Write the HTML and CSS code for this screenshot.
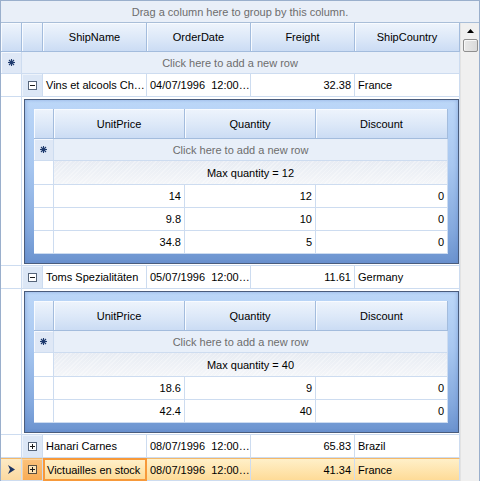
FILE: index.html
```html
<!DOCTYPE html>
<html>
<head>
<meta charset="utf-8">
<link rel="stylesheet" href="styles.css">
</head>
<body>
<div class="grid">
  <div class="group-panel">Drag a column here to group by this column.</div>
  <div class="body">
    <div class="main">
      <div class="row header">
        <div class="hcell"></div>
        <div class="hcell"></div>
        <div class="hcell">ShipName</div>
        <div class="hcell">OrderDate</div>
        <div class="hcell">Freight</div>
        <div class="hcell">ShipCountry</div>
      </div>
      <div class="newrow">
        <div class="ind nind"><svg width="9" height="9" viewBox="0 0 9 9"><g stroke="#1e3a6e" stroke-width="1.1"><line x1="4.5" y1="1" x2="4.5" y2="8"/><line x1="1" y1="4.5" x2="8" y2="4.5"/><line x1="2" y1="2" x2="7" y2="7"/><line x1="7" y1="2" x2="2" y2="7"/></g></svg></div>
        <div class="newtext">Click here to add a new row</div>
      </div>
      <div class="row data">
        <div class="ind"></div>
        <div class="exp"><svg width="9" height="9" viewBox="0 0 9 9"><rect x="0.5" y="0.5" width="8" height="8" fill="#fff" stroke="#56657a"/><path d="M2 4.5h5" stroke="#1b1b1b"/></svg></div>
        <div class="cell">Vins et alcools Ch…</div>
        <div class="cell">04/07/1996&nbsp; 12:00…</div>
        <div class="cell num">32.38</div>
        <div class="cell">France</div>
      </div>
      <div class="detail">
        <div class="ind"></div>
        <div class="detail-cell">
          <div class="panel">
            <div class="sub">
              <div class="srow shead">
                <div class="shcell"></div>
                <div class="shcell">UnitPrice</div>
                <div class="shcell">Quantity</div>
                <div class="shcell">Discount</div>
              </div>
              <div class="snew">
                <div class="sind nind"><svg width="9" height="9" viewBox="0 0 9 9"><g stroke="#1e3a6e" stroke-width="1.1"><line x1="4.5" y1="1" x2="4.5" y2="8"/><line x1="1" y1="4.5" x2="8" y2="4.5"/><line x1="2" y1="2" x2="7" y2="7"/><line x1="7" y1="2" x2="2" y2="7"/></g></svg></div>
                <div class="snewtext">Click here to add a new row</div>
              </div>
              <div class="ssum">
                <div class="sind"></div>
                <div class="sumtext">Max quantity = 12</div>
              </div>
              <div class="srow sdata"><div class="sind"></div><div class="scell">14</div><div class="scell">12</div><div class="scell">0</div></div>
              <div class="srow sdata"><div class="sind"></div><div class="scell">9.8</div><div class="scell">10</div><div class="scell">0</div></div>
              <div class="srow sdata"><div class="sind"></div><div class="scell">34.8</div><div class="scell">5</div><div class="scell">0</div></div>
            </div>
          </div>
        </div>
      </div>
      <div class="row data">
        <div class="ind"></div>
        <div class="exp"><svg width="9" height="9" viewBox="0 0 9 9"><rect x="0.5" y="0.5" width="8" height="8" fill="#fff" stroke="#56657a"/><path d="M2 4.5h5" stroke="#1b1b1b"/></svg></div>
        <div class="cell">Toms Spezialitäten</div>
        <div class="cell">05/07/1996&nbsp; 12:00…</div>
        <div class="cell num">11.61</div>
        <div class="cell">Germany</div>
      </div>
      <div class="detail">
        <div class="ind"></div>
        <div class="detail-cell">
          <div class="panel">
            <div class="sub">
              <div class="srow shead">
                <div class="shcell"></div>
                <div class="shcell">UnitPrice</div>
                <div class="shcell">Quantity</div>
                <div class="shcell">Discount</div>
              </div>
              <div class="snew">
                <div class="sind nind"><svg width="9" height="9" viewBox="0 0 9 9"><g stroke="#1e3a6e" stroke-width="1.1"><line x1="4.5" y1="1" x2="4.5" y2="8"/><line x1="1" y1="4.5" x2="8" y2="4.5"/><line x1="2" y1="2" x2="7" y2="7"/><line x1="7" y1="2" x2="2" y2="7"/></g></svg></div>
                <div class="snewtext">Click here to add a new row</div>
              </div>
              <div class="ssum">
                <div class="sind"></div>
                <div class="sumtext">Max quantity = 40</div>
              </div>
              <div class="srow sdata"><div class="sind"></div><div class="scell">18.6</div><div class="scell">9</div><div class="scell">0</div></div>
              <div class="srow sdata"><div class="sind"></div><div class="scell">42.4</div><div class="scell">40</div><div class="scell">0</div></div>
            </div>
          </div>
        </div>
      </div>
      <div class="row data">
        <div class="ind"></div>
        <div class="exp"><svg width="9" height="9" viewBox="0 0 9 9"><rect x="0.5" y="0.5" width="8" height="8" fill="#fff" stroke="#56657a"/><path d="M2 4.5h5M4.5 2v5" stroke="#1b1b1b"/></svg></div>
        <div class="cell">Hanari Carnes</div>
        <div class="cell">08/07/1996&nbsp; 12:00…</div>
        <div class="cell num">65.83</div>
        <div class="cell">Brazil</div>
      </div>
      <div class="row data selected">
        <div class="ind"><svg width="7" height="9" viewBox="0 0 7 9"><path d="M0 0L7 4.5L0 9L2 4.5Z" fill="#1c3463"/></svg></div>
        <div class="exp"><svg width="9" height="9" viewBox="0 0 9 9"><rect x="0.5" y="0.5" width="8" height="8" fill="#fde3b6" stroke="#5a5040"/><path d="M2 4.5h5M4.5 2v5" stroke="#1b1b1b"/></svg></div>
        <div class="cell current">Victuailles en stock</div>
        <div class="cell">08/07/1996&nbsp; 12:00…</div>
        <div class="cell num">41.34</div>
        <div class="cell">France</div>
      </div>
    </div>
    <div class="scrollbar">
      <div class="sb-up"><svg width="7" height="4" viewBox="0 0 7 4"><path d="M3.5 0L7 4H0Z" fill="#000"/></svg></div>
      <div class="sb-thumb"></div>
    </div>
  </div>
</div>
</body>
</html>
```
FILE: styles.css
```css
html, body {
  margin: 0;
  padding: 0;
  overflow: hidden;
}
body {
  font-family: "Liberation Sans", Arial, sans-serif;
  font-size: 11px;
  color: #000;
  background: #fff;
}
.grid {
  width: 480px;
  height: 481px;
  box-sizing: border-box;
  border: 1px solid #9aafcc;
  border-bottom: 0;
  display: flex;
  flex-direction: column;
  overflow: hidden;
  background: #fff;
}
.group-panel {
  height: 22px;
  flex: none;
  box-sizing: border-box;
  border-bottom: 1px solid #a9bed8;
  background: #e9eff8;
  color: #6d6d6d;
  display: flex;
  align-items: center;
  justify-content: center;
}
.body {
  flex: 1;
  display: flex;
  min-height: 0;
}
.main {
  width: 459px;
  flex: none;
  overflow: hidden;
}
.row {
  display: grid;
  grid-template-columns: 21px 21px 104px 104px 104px 105px;
}
.header {
  height: 29px;
}
.hcell {
  box-sizing: border-box;
  border-right: 1px solid #a3bcdd;
  border-bottom: 1px solid #a3bcdd;
  background: linear-gradient(#eef4fc, #dce8f8 55%, #cbdcf4);
  box-shadow: inset 1px 1px 0 #f8fbff;
  display: flex;
  align-items: center;
  justify-content: center;
}
.newrow {
  height: 22px;
  display: flex;
  box-sizing: border-box;
  border-bottom: 1px solid #cddcf0;
  background: #e8eff9;
}
.ind {
  width: 21px;
  flex: none;
  box-sizing: border-box;
  border-right: 1px solid #cddcf0;
  border-bottom: 1px solid #cddcf0;
  display: flex;
  align-items: center;
  justify-content: center;
}
.newrow .ind {
  border-bottom: 0;
}
.nind {
  background: #dfe8f6;
  box-shadow: inset 1px 1px 0 #f6f9fe;
}
.newtext {
  flex: 1;
  padding-right: 21px;
  color: #6d6d6d;
  display: flex;
  align-items: center;
  justify-content: center;
  border-right: 1px solid #cddcf0;
}
.data {
  height: 23px;
}
.exp {
  box-sizing: border-box;
  border-right: 1px solid #cddcf0;
  border-bottom: 1px solid #cddcf0;
  background: #dce7f6;
  box-shadow: inset 1px 1px 0 #edf3fb;
  display: flex;
  align-items: center;
  justify-content: center;
}
.cell {
  box-sizing: border-box;
  border-right: 1px solid #cddcf0;
  border-bottom: 1px solid #cddcf0;
  padding: 0 3px;
  display: flex;
  align-items: center;
  white-space: pre;
  overflow: hidden;
}
.num {
  justify-content: flex-end;
}
.selected .ind {
  background: linear-gradient(#fdebc6, #fcd9a0);
  border-top: 1px solid #f3b86a;
}
.selected .exp {
  background: linear-gradient(#fbc27c, #f8ac55);
  box-shadow: inset 1px 1px 0 #fcd49e;
  border-top: 1px solid #f3b86a;
}
.selected .cell {
  background: linear-gradient(#fff0c9, #fedb97);
  border-top: 1px solid #f3b86a;
}
.selected .cell.current {
  border: 2px solid #f7993a;
  padding-left: 2px;
}
.detail {
  display: flex;
  height: 169px;
}
.detail + .data + .detail {
  height: 146px;
}
.detail .ind {
  height: 100%;
}
.detail-cell {
  width: 438px;
  box-sizing: border-box;
  border-right: 1px solid #cddcf0;
  border-bottom: 1px solid #cddcf0;
  padding: 2px 0 1px 2px;
}
.panel {
  height: 100%;
  box-sizing: border-box;
  border: 1px solid #4a5c7c;
  padding: 9px 10px 9px 9px;
  background: linear-gradient(#bcd7f8 0%, #a8c7f0 40%, #84a9de 80%, #6b93cf 100%);
  box-shadow: inset 2px 0 3px rgba(90, 130, 200, 0.25), inset -2px 0 3px rgba(90, 130, 200, 0.25);
}
.sub {
  background: #fff;
  height: 100%;
}
.srow {
  display: grid;
  grid-template-columns: 20px 131px 131px 132px;
}
.shead {
  height: 30px;
}
.shcell {
  box-sizing: border-box;
  border-right: 1px solid #a3bcdd;
  border-bottom: 1px solid #a3bcdd;
  background: linear-gradient(#eef4fc, #dce8f8 55%, #cbdcf4);
  box-shadow: inset 1px 1px 0 #f8fbff;
  display: flex;
  align-items: center;
  justify-content: center;
}
.snew {
  height: 22px;
  display: flex;
  box-sizing: border-box;
  border-bottom: 1px solid #cddcf0;
  background: #e8eff9;
}
.sind {
  width: 20px;
  flex: none;
  box-sizing: border-box;
  border-right: 1px solid #cddcf0;
  display: flex;
  align-items: center;
  justify-content: center;
}
.sdata .sind {
  border-bottom: 1px solid #cddcf0;
}
.snewtext {
  flex: 1;
  padding-right: 20px;
  color: #6d6d6d;
  display: flex;
  align-items: center;
  justify-content: center;
  border-right: 1px solid #cddcf0;
}
.ssum {
  height: 24px;
  display: flex;
  box-sizing: border-box;
  border-bottom: 1px solid #cddcf0;
}
.sumtext {
  flex: 1;
  display: flex;
  align-items: center;
  justify-content: center;
  border-right: 1px solid #cddcf0;
  background:
    repeating-linear-gradient(135deg, rgba(255, 255, 255, 0.3) 0 1px, rgba(255, 255, 255, 0) 1px 3px),
    linear-gradient(#e8ecf3, #f4f6f9);
}
.sdata {
  height: 23px;
}
.scell {
  box-sizing: border-box;
  border-right: 1px solid #cddcf0;
  border-bottom: 1px solid #cddcf0;
  padding: 0 3px;
  display: flex;
  align-items: center;
  justify-content: flex-end;
}
.scrollbar {
  width: 19px;
  flex: none;
  background: #f0f0f0;
  display: flex;
  flex-direction: column;
  align-items: center;
  border-left: 1px solid #e3e3e3;
}
.sb-up {
  height: 16px;
  width: 100%;
  display: flex;
  align-items: center;
  justify-content: center;
}
.sb-thumb {
  width: 15px;
  height: 13px;
  box-sizing: border-box;
  border: 1px solid #8f8f8f;
  border-radius: 2px;
  background: linear-gradient(90deg, #e9e9e9, #dadada);
  box-shadow: inset 1px 1px 0 #f8f8f8;
}
```
